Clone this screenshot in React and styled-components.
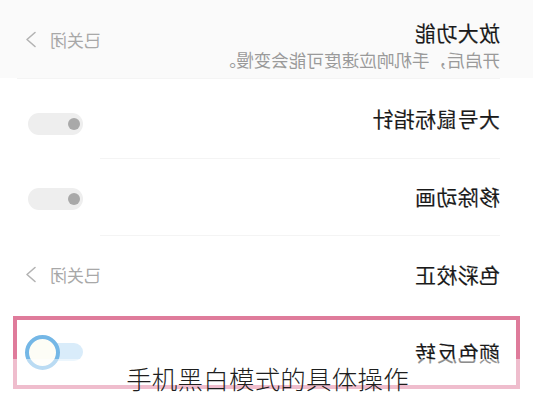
import React from "react";
import styled, { createGlobalStyle } from "styled-components";

const Global = createGlobalStyle`
  html, body { margin: 0; padding: 0; background: #ffffff; }
  body { font-family: "Noto Sans CJK SC", "Noto Sans", sans-serif; }
`;

const Page = styled.div`
  position: relative;
  width: 533px;
  height: 400px;
  overflow: hidden;
  background: #ffffff;
`;

/* the screenshot is a mirror image of the settings screen */
const Mirror = styled.div`
  transform: scaleX(-1);
  display: flex;
  flex-direction: column;
  width: 533px;
`;

const Row = styled.div`
  display: flex;
  align-items: center;
  justify-content: space-between;
  height: ${(p) => p.$h}px;
  padding: 0 25px 0 33px;
  box-sizing: border-box;
  background: ${(p) => (p.$tint ? "#fafafa" : "#ffffff")};
`;

const Divider = styled.div`
  height: 1px;
  background: #f4f4f4;
  margin: 0 ${(p) => p.$right}px 0 33px;
`;

const Texts = styled.div`
  display: flex;
  flex-direction: column;
  gap: 7px;
  transform: translateY(6px);
`;

const Title = styled.div`
  font-size: 21px;
  line-height: 22px;
  font-weight: 400;
  color: #1a1a1a;
  -webkit-text-stroke: 0.15px #1a1a1a;
  letter-spacing: 0.3px;
  transform: translateY(${(p) => p.$dy || 0}px);
`;

const Sub = styled.div`
  font-size: 17.6px;
  line-height: 20px;
  color: #9a9a9a;
`;

const Status = styled.div`
  display: flex;
  align-items: center;
  gap: 13px;
  font-size: 17px;
  color: #a8a8a8;
  transform: translateY(${(p) => p.$dy || 0}px);
`;

const SwitchTrack = styled.div`
  position: relative;
  width: 55px;
  height: 22px;
  margin-right: 3px;
  border-radius: 11px;
  background: #eeeeee;
  transform: translateY(${(p) => p.$dy || 0}px);
`;

const Knob = styled.div`
  position: absolute;
  left: 3px;
  top: 5px;
  width: 12px;
  height: 12px;
  border-radius: 50%;
  background: #a9a9a9;
`;

const ActiveSwitch = styled.div`
  position: relative;
  width: 58px;
  height: 35px;
`;

const ActiveTrack = styled.div`
  position: absolute;
  left: 0;
  top: 8px;
  width: 44px;
  height: 18px;
  border-radius: 9px;
  background: #d9ecfa;
`;

const Ring = styled.div`
  position: absolute;
  right: 0;
  top: 0;
  width: 27px;
  height: 27px;
  border-radius: 50%;
  border: 4px solid #74b7e6;
  background: #fdfdf6;
`;

const Highlight = styled.div`
  position: absolute;
  left: 13px;
  top: 316px;
  width: 507px;
  height: 73px;
  box-sizing: border-box;
  border: 4px solid #df7b9b;
`;

const Caption = styled.div`
  position: absolute;
  left: 0;
  right: 0;
  top: 359px;
  height: 41px;
  background: rgba(255, 255, 255, 0.5);
  display: flex;
  justify-content: center;
  padding-left: 2px;
  padding-top: 2px;
  box-sizing: border-box;
  font-family: "Noto Sans CJK SC", sans-serif;
  font-weight: 300;
  font-size: 25.5px;
  line-height: 34px;
  color: #1e1e1e;
  letter-spacing: 0.2px;
`;

const Chevron = () => (
  <svg width="12" height="17" viewBox="0 0 12 17" fill="none">
    <path d="M2 1.5 L10 8.5 L2 15.5" stroke="#b3b3b3" strokeWidth="1.6" strokeLinecap="round" strokeLinejoin="round" />
  </svg>
);

const Switch = ({ dy }) => (
  <SwitchTrack $dy={dy}>
    <Knob />
  </SwitchTrack>
);

export default function App() {
  return (
    <Page>
      <Global />
      <Mirror>
        <Row $h={78} $tint>
          <Texts>
            <Title>放大功能</Title>
            <Sub>开启后，手机响应速度可能会变慢。</Sub>
          </Texts>
          <Status>
            已关闭
            <Chevron />
          </Status>
        </Row>
        <Divider $right={17} />
        <Row $h={79}>
          <Title $dy={-1}>大号鼠标指针</Title>
          <Switch dy={5} />
        </Row>
        <Divider $right={100} />
        <Row $h={76}>
          <Title $dy={-1}>移除动画</Title>
          <Switch dy={2} />
        </Row>
        <Divider $right={100} />
        <Row $h={76}>
          <Title>色彩校正</Title>
          <Status>
            已关闭
            <Chevron />
          </Status>
        </Row>
        <Row $h={80}>
          <Title>颜色反转</Title>
          <ActiveSwitch>
            <ActiveTrack />
            <Ring />
          </ActiveSwitch>
        </Row>
      </Mirror>
      <Highlight />
      <Caption>手机黑白模式的具体操作</Caption>
    </Page>
  );
}
